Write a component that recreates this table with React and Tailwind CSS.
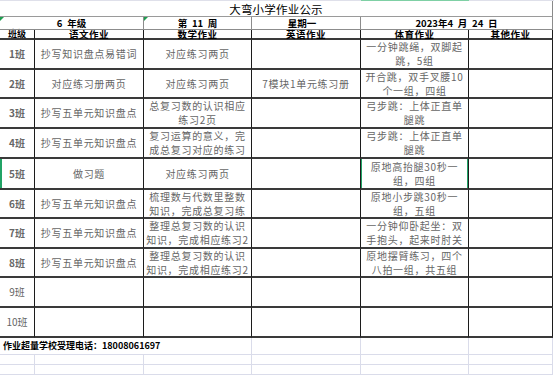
import React from "react";

const COLS = "grid grid-cols-[35px_109px_108px_109px_108px_84px]";
const FONT = { fontFamily: '"Noto Sans CJK SC", "Noto Sans", sans-serif' };

const rows = [
  { label: "1班", h: "h-[30px]", yw: ["抄写知识盘点易错词"], sx: ["对应练习两页"], yy: [], ty: ["一分钟跳绳，双脚起", "跳，5组"] },
  { label: "2班", h: "h-[29px]", yw: ["对应练习册两页"], sx: ["对应练习两页"], yy: ["7模块1单元练习册"], ty: ["开合跳，双手叉腰10", "个一组，四组"] },
  { label: "3班", h: "h-[30px]", yw: ["抄写五单元知识盘点"], sx: ["总复习数的认识相应", "练习2页"], yy: [], ty: ["弓步跳：上体正直单", "腿跳"] },
  { label: "4班", h: "h-[30px]", yw: ["抄写五单元知识盘点"], sx: ["复习运算的意义，完", "成总复习对应的练习"], yy: [], ty: ["弓步跳：上体正直单", "腿跳"] },
  { label: "5班", h: "h-[31px]", yw: ["做习题"], sx: ["对应练习两页"], yy: [], ty: ["原地高抬腿30秒一", "组，四组"], sel: true },
  { label: "6班", h: "h-[29px]", yw: ["抄写五单元知识盘点"], sx: ["梳理数与代数里整数", "知识，完成总复习练"], yy: [], ty: ["原地小步跳30秒一", "组，五组"] },
  { label: "7班", h: "h-[30px]", yw: ["抄写五单元知识盘点"], sx: ["整理总复习数的认识", "知识，完成相应练习2"], yy: [], ty: ["一分钟仰卧起坐：双", "手抱头，起来时肘关"] },
  { label: "8班", h: "h-[29px]", yw: ["抄写五单元知识盘点"], sx: ["整理总复习数的认识", "知识，完成相应练习2"], yy: [], ty: ["原地摆臂练习，四个", "八拍一组，共五组"] },
  { label: "9班", h: "h-[30px]", yw: [], sx: [], yy: [], ty: [], light: true },
  { label: "10班", h: "h-[30px]", yw: [], sx: [], yy: [], ty: [], light: true },
];

function Cell({ lines, children, className = "" }) {
  return (
    <div
      className={
        "relative flex flex-col items-center justify-center overflow-hidden whitespace-nowrap border-r border-b-2 border-r-[#1c1c1c] border-b-[#3a3a3a] text-center text-[10px] leading-[14px] tracking-[0.7px] text-[#666] " +
        className
      }
    >
      {lines && lines.map((l, i) => <div key={i}>{l}</div>)}
      {children}
    </div>
  );
}

function Tri() {
  return (
    <div className="absolute left-0 top-0 h-0 w-0 border-r-[4px] border-t-[4px] border-r-transparent border-t-[#1e9e50]" />
  );
}

export default function App() {
  return (
    <div className="h-[376px] w-[554px] overflow-hidden bg-white" style={FONT}>
      {/* top strip */}
      <div className="flex h-px">
        <div className="w-[361px] bg-[#dfe0ea]" />
        <div className="w-[108px] bg-[#7fd0a5]" />
        <div className="flex-1 bg-[#dfe0ea]" />
      </div>
      {/* title row */}
      <div className="flex h-[16px] w-[553px] items-center justify-center border-r border-b border-r-[#8a8a8a] border-b-[#9a9a9a] text-[11.5px] leading-[14px] tracking-[0.2px] text-black">
        大弯小学作业公示
      </div>
      {/* grade/week row */}
      <div className={COLS + " h-[13px] text-[9.5px] font-bold leading-[11px] text-black"}>
        <div className="relative col-span-2 flex items-center justify-center whitespace-pre border-r border-b border-[#8c8c8c]">
          <Tri />{"6\u2002年级"}
        </div>
        <div className="relative flex items-center justify-center whitespace-pre border-r border-b border-[#8c8c8c]">
          <Tri />{"第\u200211\u2002周"}
        </div>
        <div className="flex items-center justify-center border-r border-b border-[#8c8c8c] pr-2">星期一</div>
        <div className="col-span-2 flex items-center justify-center whitespace-pre border-r border-b border-[#8c8c8c]">
          {"2023年4\u2002月\u200224\u2002日"}
        </div>
      </div>
      {/* header row */}
      <div className={COLS + " h-[10px] text-[9.5px] font-bold leading-[8px] text-black"}>
        <div className="flex items-center justify-center border-r border-b-2 border-r-[#1c1c1c] border-b-[#3a3a3a] text-[9px]">班级</div>
        <div className="flex items-center justify-center border-r border-b-2 border-r-[#1c1c1c] border-b-[#3a3a3a] tracking-[0.5px]">语文作业</div>
        <div className="flex items-center justify-center border-r border-b-2 border-r-[#1c1c1c] border-b-[#3a3a3a] tracking-[0.5px]">数学作业</div>
        <div className="flex items-center justify-center border-r border-b-2 border-r-[#1c1c1c] border-b-[#3a3a3a] tracking-[0.5px]">英语作业</div>
        <div className="flex items-center justify-center border-r border-b-2 border-r-[#1c1c1c] border-b-[#3a3a3a] tracking-[0.5px]">体育作业</div>
        <div className="flex items-center justify-center border-r border-b-2 border-r-[#1c1c1c] border-b-[#3a3a3a] tracking-[0.5px]">其他作业</div>
      </div>
      {/* body */}
      {rows.map((r) => (
        <div key={r.label} className={COLS + " relative " + r.h}>
          {r.sel && <div className="absolute left-0 top-0 h-full w-[2px] bg-[#21a366]" />}
          <Cell
            className={
              r.light
                ? "text-[9.5px] tracking-normal text-[#333]"
                : "text-[9px] font-bold tracking-normal text-[#333]"
            }
            lines={[r.label]}
          />
          <Cell lines={r.yw} />
          <Cell lines={r.sx} />
          <Cell lines={r.yy} />
          <Cell lines={r.ty}>
            {r.sel && (
              <div className="absolute left-[-1px] right-[-1px] top-[-2px] bottom-[-2px] border-2 border-[#21a366]" />
            )}
          </Cell>
          <Cell />
        </div>
      ))}
      {/* footer */}
      <div className={COLS + " h-[17px]"}>
        <div className="col-span-3 flex items-center whitespace-nowrap border-r border-b border-[#dadcea] pl-[3px] text-[9px] font-bold leading-[12px] text-black">
          作业超量学校受理电话：18008061697
        </div>
        <div className="border-r border-b border-[#dadcea]" />
        <div className="border-r border-b border-[#dadcea]" />
        <div className="border-r border-b border-[#dadcea]" />
      </div>
      {[0, 1].map((i) => (
        <div key={i} className={COLS + " h-[10px]"}>
          {[0, 1, 2, 3, 4, 5].map((j) => (
            <div key={j} className="border-r border-b border-[#dadcea]" />
          ))}
        </div>
      ))}
    </div>
  );
}
